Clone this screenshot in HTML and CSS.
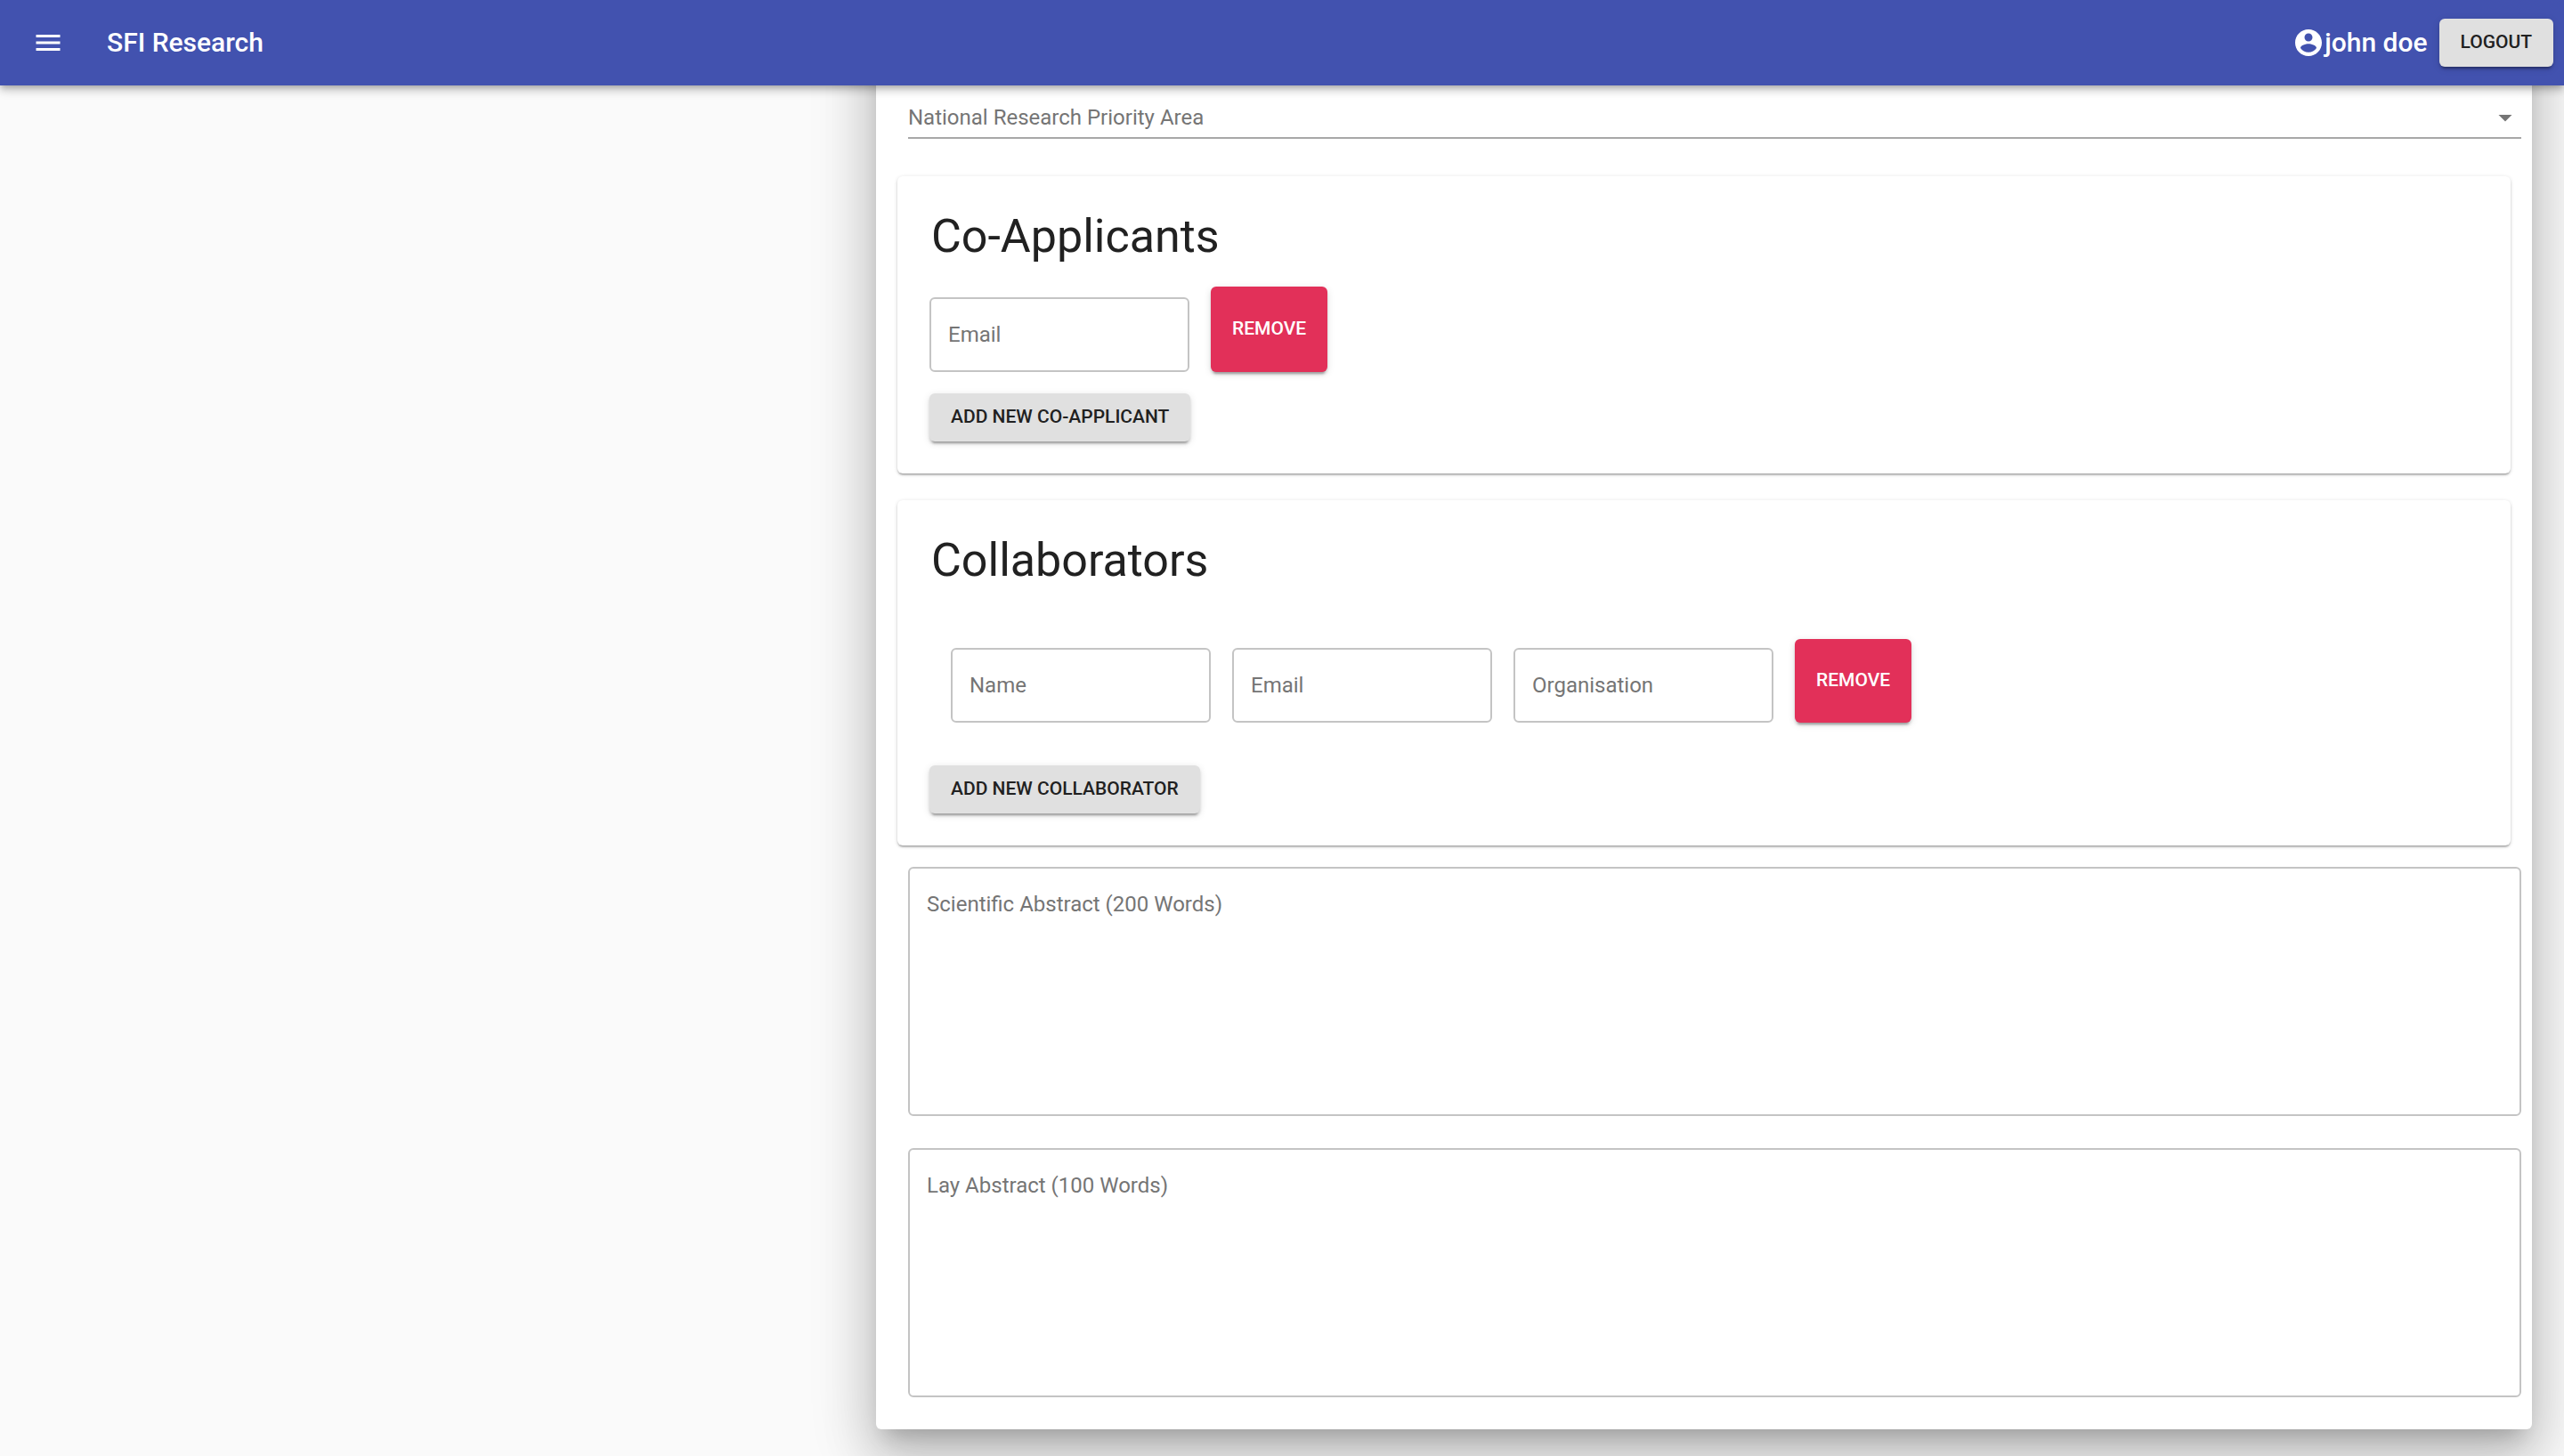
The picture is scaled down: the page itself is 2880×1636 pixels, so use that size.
FILE: index.html
```html
<!DOCTYPE html>
<html lang="en">
<head>
<meta charset="utf-8">
<meta name="viewport" content="width=device-width, initial-scale=1">
<title>SFI Research</title>
<link rel="stylesheet" href="styles.css">
</head>
<body>
<header class="app-bar">
  <button class="icon-button" type="button" aria-label="Menu">
    <svg class="icon" viewBox="0 0 24 24" aria-hidden="true"><path d="M3 18h18v-2H3v2zm0-5h18v-2H3v2zm0-7v2h18V6H3z"/></svg>
  </button>
  <h1 class="app-title">SFI Research</h1>
  <div class="user">
    <svg class="icon" viewBox="0 0 24 24" aria-hidden="true"><path d="M12 2C6.48 2 2 6.48 2 12s4.48 10 10 10 10-4.480 10-10S17.520 2 12 2zm0 3c1.660 0 3 1.340 3 3s-1.340 3-3 3-3-1.340-3-3 1.340-3 3-3zm0 14.200c-2.500 0-4.710-1.280-6-3.220.030-1.990 4-3.080 6-3.080 1.990 0 5.970 1.090 6 3.080-1.290 1.940-3.500 3.220-6 3.220z"/></svg>
    <span class="user-name">john doe</span>
  </div>
  <button class="button" type="button">LOGOUT</button>
</header>
<main class="page">
  <form class="paper">
    <div class="select-field">
      <label class="field-label" for="priority-area">National Research Priority Area</label>
      <select class="select" id="priority-area"><option value=""></option></select>
      <svg class="icon select-arrow" viewBox="0 0 24 24" aria-hidden="true"><path d="M7 10l5 5 5-5z"/></svg>
    </div>

    <section class="card">
      <h2 class="card-title">Co-Applicants</h2>
      <div class="row">
        <div class="field">
          <label class="field-label" for="applicant-email">Email</label>
          <input class="input" id="applicant-email" type="email">
        </div>
        <button class="button button-remove" type="button">REMOVE</button>
      </div>
      <button class="button" type="button">ADD NEW CO-APPLICANT</button>
    </section>

    <section class="card">
      <h2 class="card-title">Collaborators</h2>
      <div class="row row-inset">
        <div class="field">
          <label class="field-label" for="collaborator-name">Name</label>
          <input class="input" id="collaborator-name" type="text">
        </div>
        <div class="field">
          <label class="field-label" for="collaborator-email">Email</label>
          <input class="input" id="collaborator-email" type="email">
        </div>
        <div class="field">
          <label class="field-label" for="collaborator-organisation">Organisation</label>
          <input class="input" id="collaborator-organisation" type="text">
        </div>
        <button class="button button-remove" type="button">REMOVE</button>
      </div>
      <button class="button" type="button">ADD NEW COLLABORATOR</button>
    </section>

    <div class="abstracts">
      <div class="field field-multiline">
        <label class="field-label" for="scientific-abstract">Scientific Abstract (200 Words)</label>
        <textarea class="input textarea" id="scientific-abstract"></textarea>
      </div>
      <div class="field field-multiline">
        <label class="field-label" for="lay-abstract">Lay Abstract (100 Words)</label>
        <textarea class="input textarea" id="lay-abstract"></textarea>
      </div>
    </div>
  </form>
</main>
</body>
</html>
```
FILE: styles.css
```css
* {
  box-sizing: border-box;
}

body {
  margin: 0;
  background: #fafafa;
  color: #212121;
  font-family: Roboto, "Liberation Sans", sans-serif;
  font-size: 24px;
  line-height: 28px;
}

button,
input,
select,
textarea {
  font: inherit;
  color: inherit;
}

.icon {
  display: block;
  width: 36px;
  height: 36px;
  fill: currentColor;
}

/* App bar */
.app-bar {
  position: sticky;
  top: 0;
  z-index: 1;
  display: flex;
  align-items: center;
  height: 96px;
  padding: 0 12px 0 18px;
  background: #4252af;
  color: #fff;
  box-shadow: 0 3px 6px -2px rgba(0, 0, 0, 0.2), 0 6px 8px rgba(0, 0, 0, 0.14), 0 2px 15px rgba(0, 0, 0, 0.12);
}

.icon-button {
  padding: 18px;
  border: 0;
  background: none;
}

.app-title,
.user {
  font-size: 30px;
  font-weight: 500;
  line-height: 48px;
}

.app-title {
  flex: 1;
  margin: 0 0 0 30px;
}

.user {
  display: flex;
  align-items: center;
  margin-right: 13px;
}

/* Buttons */
.button {
  padding: 8px 24px 10px;
  border: 0;
  border-radius: 6px;
  background: #e0e0e0;
  font-size: 21px;
  font-weight: 500;
  line-height: 36px;
  color: #212121;
  box-shadow: 0 5px 2px -3px rgba(0, 0, 0, 0.2), 0 3px 3px rgba(0, 0, 0, 0.14), 0 2px 8px rgba(0, 0, 0, 0.12);
}

.button-remove {
  background: #e23059;
  color: #fff;
}

/* Form sheet: the right two thirds of the page, running under the app bar */
.page {
  display: grid;
  grid-template-columns: 1fr 2fr;
  margin-top: -96px;
  overflow: hidden;
}

.paper {
  grid-column: 2;
  margin: 0 36px 30px 24px;
  padding: 108px 24px 36px;
  border-radius: 6px;
  background: #fff;
  box-shadow: 0 17px 23px -11px rgba(0, 0, 0, 0.2), 0 36px 57px 5px rgba(0, 0, 0, 0.14), 0 14px 69px 12px rgba(0, 0, 0, 0.12);
}

.field-label {
  color: #757575;
  pointer-events: none;
}

.select-field {
  display: grid;
  align-items: center;
  margin: 0 -12px 42px 12px;
}

.select-field > * {
  grid-area: 1 / 1;
}

.select {
  width: 100%;
  height: 48px;
  border: 0;
  border-bottom: 2px solid #a8a8a8;
  border-radius: 0;
  background: none;
  appearance: none;
}

.select-arrow {
  justify-self: end;
  color: #757575;
  pointer-events: none;
}

.card {
  margin-bottom: 30px;
  padding: 36px;
  border-radius: 6px;
  box-shadow: 0 3px 2px -2px rgba(0, 0, 0, 0.2), 0 2px 2px rgba(0, 0, 0, 0.14), 0 1px 4px rgba(0, 0, 0, 0.16);
}

.card-title {
  margin: 0 2px 24px;
  font-size: 52px;
  font-weight: 400;
  line-height: 64px;
}

.row {
  display: flex;
  gap: 24px;
  margin-bottom: 24px;
}

.row .field {
  width: 292px;
  margin-top: 12px;
}

.row-inset {
  padding: 32px 24px 24px;
}

.row-inset .field {
  margin-top: 10px;
}

.field {
  display: grid;
  align-items: center;
}

.field > * {
  grid-area: 1 / 1;
}

.field .field-label {
  padding: 0 21px;
}

.input {
  width: 100%;
  height: 84px;
  padding: 0 19px;
  border: 2px solid #c4c4c4;
  border-radius: 6px;
  background: none;
}

.field-multiline {
  align-items: start;
}

.field-multiline .field-label {
  padding-top: 28px;
}

.textarea {
  height: 280px;
  padding: 26px 19px;
  resize: none;
}

.abstracts {
  display: grid;
  gap: 36px;
  margin: -6px -12px 0 12px;
}
```
